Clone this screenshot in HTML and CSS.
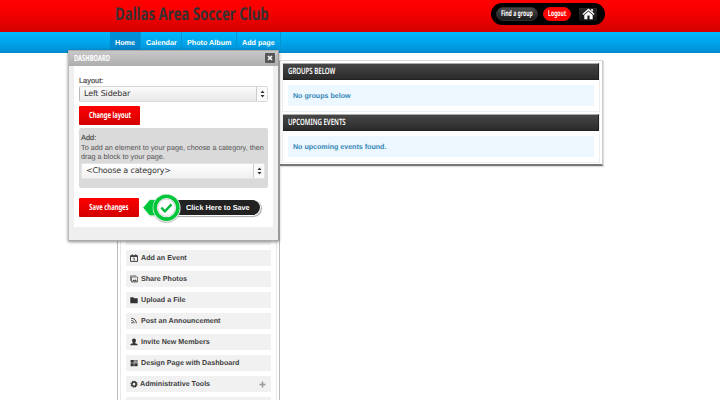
FILE: index.html
```
<!DOCTYPE html>
<html lang="en">
<head>
<meta charset="utf-8">
<title>Dallas Area Soccer Club</title>
<link rel="stylesheet" href="styles.css">
</head>
<body>
<header class="top">
  <h1 class="narrow"><span class="title">Dallas Area Soccer Club</span></h1>
  <div class="account">
    <a class="pill dark"><span class="find">Find a group</span></a>
    <a class="pill red"><span class="logout">Logout</span></a>
    <a class="home"><svg width="13" height="12" viewBox="0 0 13 12"><path d="M6.5.5 12.6 6l-.8 1-5.3-4.600L1.200 7 .4 6z" fill="#fff"/><path d="M9.2 1h1.600v3L9.200 2.600zM2.300 7 6.500 3.400 10.700 7v4.300H7.600V7.600H5.400v3.700H2.300z" fill="#fff"/></svg></a>
  </div>
</header>
<nav class="nav">
  <a class="tab active">Home</a><a class="tab cal">Calendar</a><a class="tab album">Photo Album</a><a class="tab add">Add page</a>
</nav>
<main class="page">
  <aside class="sidebar">
    <div class="rail">
      <a class="item"><i></i>Send a Message</a>
      <a class="item"><i><svg viewBox="0 0 8 8"><path d="M.5 1.6h7v5.8h-7zM.5 2.5h7M2.3.3v2M5.7.3v2" fill="none" stroke="#444"/><path d="M3.2 4h1v2.6" fill="none" stroke="#444" stroke-width=".9"/></svg></i>Add an Event</a>
      <a class="item"><i><svg viewBox="0 0 8 8"><path d="M1.5 2h6v5h-6zM.4 5.8V.9h5.8" fill="none" stroke="#555" stroke-width=".8"/><path d="m2 6.5 1.6-2 1 1 1-1.3L7.2 6.5z" fill="#444"/></svg></i>Share Photos</a>
      <a class="item"><i><svg viewBox="0 0 8 8"><path d="M.3 1.3h3l.8 1h3.6v4.9H.3z" fill="#333"/></svg></i>Upload a File</a>
      <a class="item"><i><svg viewBox="0 0 8 8"><path d="M1.3 1.3c3 0 5 2 5 5M1.3 3.5c1.8 0 2.8 1 2.8 2.8" fill="none" stroke="#444" stroke-width="1"/><circle cx="2" cy="5.8" r=".8" fill="#444"/></svg></i>Post an Announcement</a>
      <a class="item"><i><svg viewBox="0 0 8 8"><path d="M4 .5c1.300 0 2 .9 1.900 2.200 0 .9-.4 1.500-.8 1.900l.1.600 2.300.8v1.300H.5V6l2.300-.8.1-.6c-.4-.4-.8-1-.8-1.900C2 1.400 2.700.5 4 .5z" fill="#333"/></svg></i>Invite New Members</a>
      <a class="item"><i><svg viewBox="0 0 8 8"><path d="M.6 1h3.200v2.700H.6zM.6 4.200h3.200v3H.6zM4.300 4.200h3.300v3H4.300z" fill="#333"/><path d="M4.300 1h1.400v1.200H4.300zM6.200 1h1.400v1.200H6.200zM4.300 2.600h1.400v1.100H4.300zM6.200 2.600h1.400v1.100H6.200z" fill="#555"/></svg></i>Design Page with Dashboard</a>
      <a class="item admin"><i><svg viewBox="0 0 8 8"><circle cx="4" cy="4.200" r="2.100" fill="none" stroke="#333" stroke-width="1.500"/><circle cx="4" cy="4.200" r="3" fill="none" stroke="#333" stroke-width="1.100" stroke-dasharray="1.300 1.056"/></svg></i>Administrative Tools<b><svg width="7" height="7" viewBox="0 0 7 7"><path d="M3.500.5v6M.5 3.500h6" stroke="#999" stroke-width="1.500"/></svg></b></a>
      <a class="item"></a>
    </div>
  </aside>
  <section class="content">
    <div class="block">
      <h2 class="narrow"><span class="groups">GROUPS BELOW</span></h2>
      <p>No groups below</p>
    </div>
    <div class="block">
      <h2 class="narrow"><span class="upcoming">UPCOMING EVENTS</span></h2>
      <p>No upcoming events found.</p>
    </div>
  </section>
</main>
<div class="dialog">
  <div class="bar"><span class="narrow dash">DASHBOARD</span>
    <span class="close"><svg width="10" height="10" viewBox="0 0 10 10"><path d="m3 3 4 4m0-4-4 4" stroke="#fff" stroke-width="1.500"/></svg></span>
  </div>
  <div class="body">
    <label class="label">Layout:</label>
    <div class="select"><span>Left Sidebar</span><em><svg width="5" height="8" viewBox="0 0 5 8"><path d="M2.500.5 4.500 3h-4zM2.500 7.500l2-2.500h-4z" fill="#333"/></svg></em></div>
    <a class="btn change"><span class="changetext">Change layout</span></a>
    <div class="addbox">
      <label class="label">Add:</label>
      <p><span class="l1">To add an element to your page, choose a category, then</span><span class="l2">drag a block to your page.</span></p>
      <div class="select choose"><span>&lt;Choose a category&gt;</span><em><svg width="5" height="8" viewBox="0 0 5 8"><path d="M2.500.5 4.500 3h-4zM2.500 7.500l2-2.500h-4z" fill="#333"/></svg></em></div>
    </div>
    <div class="saverow">
      <a class="btn save"><span class="savetext">Save changes</span></a>
      <div class="hint">
        <span class="hinttext">Click Here to Save</span>
        <svg class="check" width="40" height="32" viewBox="0 0 40 32"><path d="M1 16 8 7.500h9v17H8z" fill="#999" opacity=".6"/><circle cx="24.500" cy="16.500" r="14.400" fill="#aaa" opacity=".6"/><path d="M.8 15.700 7.700 7.600H17v16.200H7.700z" fill="#00c63a" stroke="#fff" stroke-width=".8"/><circle cx="24.500" cy="15.700" r="13.800" fill="#fff"/><circle cx="24.500" cy="15.700" r="11.400" fill="#fff" stroke="#00c63a" stroke-width="3.600"/><circle cx="24.500" cy="15.700" r="8.700" fill="none" stroke="#bbb" stroke-width=".7"/><path d="m19.300 15.700 3.600 3.600 6.600-6.900" fill="none" stroke="#00b93a" stroke-width="2.400"/></svg>
      </div>
    </div>
  </div>
</div>
</body>
</html>
```

FILE: styles.css
```
* { box-sizing: border-box; }
body { margin: 0; width: 720px; height: 400px; overflow: hidden; background: #fff; font-family: "Liberation Sans", sans-serif; color: #444; position: relative; text-rendering: geometricPrecision; }
h1, h2, p { margin: 0; }
svg { display: block; }
.narrow, .pill, .btn { font-family: "Noto Sans", sans-serif; }
.narrow span, .pill span, .btn span { display: inline-block; white-space: nowrap; }

.top { height: 32px; display: flex; justify-content: space-between; padding: 3px 115px 0 115px; background: linear-gradient(#ff0000, #fa0000 30%, #d40000); }
h1 { width: 160px; font-size: 17.5px; line-height: 23px; color: #383030; }
.title { transform: scaleX(.757); transform-origin: left; }
.account { width: 114px; height: 22px; display: flex; align-items: center; padding-left: 5px; border-radius: 11px; background: #000; }
.pill { height: 14px; border-radius: 7px; color: #fff; font-size: 8px; font-weight: bold; line-height: 12px; display: flex; justify-content: center; }
.dark { width: 42px; background: linear-gradient(#484848, #1b1b1b); border: 1px solid #303030; }
.red { width: 28px; margin-left: 5px; background: #f00; border: 1px solid #e00; }
.find { transform: scaleX(.64); }
.logout { transform: scaleX(.64); }
.home { width: 18px; height: 13px; margin-left: 8px; display: flex; justify-content: center; background: linear-gradient(#292929, #111); }

.nav { height: 21px; padding-left: 110px; display: flex; background: linear-gradient(#00baff, #0091d8 92%, #0083c6); }
.tab { height: 21px; border-right: 1px solid #0794d2; padding-left: 5px; color: #fff; font-size: 7.200px; font-weight: bold; line-height: 21px; white-space: nowrap; }
.active { width: 31px; background: linear-gradient(#0091da, #0083c9); }
.cal { width: 41px; }
.album { width: 55px; }
.add { width: 44px; }

.page { display: flex; padding: 7px 0 0 117px; }
.sidebar { width: 163px; height: 345px; border: 1px solid #bbb; border-top-color: #eee; padding: 0 2px; }
.rail { height: 345px; border: 1px solid #e8e8e8; padding: 167px 5px 0; display: flex; flex-direction: column; gap: 5px; }
.item { flex: none; height: 16px; background: #f1f1f1; display: flex; align-items: center; padding-left: 4px; color: #3e3e3e; font-size: 7.150px; font-weight: bold; white-space: nowrap; }
.item i { width: 8px; height: 8px; margin-right: 3px; }
.admin i { margin-right: 2px; }
.admin b { margin-left: auto; margin-right: 5px; }
.content { width: 323px; height: 106px; padding: 2px 2px 0; border: solid; border-width: 1px 1px 2px 0; border-color: #ddd #ccc #777 #ddd; box-shadow: 1px 1px 1px #ddd; }
.block { height: 49px; margin-bottom: 2px; border: 1px solid #eee; border-top: 0; padding-bottom: 5px; }
h2 { height: 17px; padding-left: 5px; border: 1px solid #222; border-top-color: #aaa; border-left: 0; background: linear-gradient(#464646, #2b2b2b); color: #fff; font-size: 8.800px; line-height: 15px; font-weight: bold; }
.groups, .upcoming { transform: scaleX(.69); transform-origin: left; font-weight: 600; }
.block p { height: 21px; margin: 5px 5px 0; padding-left: 5px; background: #edf7ff; color: #3486b5; font-size: 7.100px; font-weight: bold; line-height: 22px; }

.dialog { position: absolute; left: 68px; top: 50px; width: 211px; height: 191px; background: #efefef; border: 1px solid #aaa; border-color: #aaa #999 #aaa #bbb; box-shadow: 0 1px 3px rgba(0,0,0,.45); }
.bar { height: 15px; padding: 0 3px 0 5px; display: flex; justify-content: space-between; align-items: center; background: linear-gradient(#c8c8c8, #adadad); color: #fff; font-size: 8.500px; font-weight: bold; line-height: 15px; }
.dash { display: inline-block; transform: scaleX(.68); transform-origin: left; }
.close { width: 10px; height: 10px; margin-bottom: 1px; border-radius: 1px; background: #555; }
.body { width: 199px; height: 161px; margin-left: 5px; padding: 8px 5px 0; background: #fff; }
.label { display: block; height: 12px; font-size: 7.400px; line-height: 13px; -webkit-text-stroke: .2px #555; }
.select { height: 16px; display: flex; justify-content: space-between; border: 1px solid #d8d8d8; border-left-color: #bbb; border-radius: 2px; background: linear-gradient(#fbfbfb, #e8e8e8); font-family: "DejaVu Sans", sans-serif; font-size: 8px; letter-spacing: -.18px; line-height: 14px; padding-left: 4px; color: #333; }
.select em { width: 11px; border-left: 1px solid #ccc; display: flex; align-items: center; justify-content: center; background: #fafafa; }
.btn { height: 19px; display: flex; justify-content: center; border-radius: 1px; background: linear-gradient(#fc0000, #d30000); color: #fff; font-size: 8.600px; font-weight: bold; line-height: 19px; }
.change { width: 61px; margin-top: 4px; }
.changetext, .savetext { transform: scaleX(.68); }
.addbox { height: 60px; margin-top: 3px; padding: 3px 3px 0 2px; border-radius: 2px; background: #dadada; }
.addbox .label { height: 11px; }
.addbox p { font-size: 7.250px; line-height: 9px; height: 21px; padding-top: 1px; color: #555; white-space: nowrap; }
.addbox p span { display: block; }
.choose { border-color: #e5e5e5; background: linear-gradient(#fff, #f0f0f0); }
.saverow { display: flex; margin-top: 10px; }
.save { width: 60px; }
.hint { position: relative; width: 122px; height: 19px; padding: 2px 0 0 25px; }
.hinttext { display: block; width: 96px; height: 15px; padding-left: 22px; border-radius: 0 8px 8px 0; background: #222; box-shadow: 0 0 0 1px #fff, 1px 1px 1px 1px #aaa; color: #fff; font-size: 7.300px; font-weight: bold; line-height: 15px; white-space: nowrap; }
.check { position: absolute; left: 3px; top: -6px; }
```
